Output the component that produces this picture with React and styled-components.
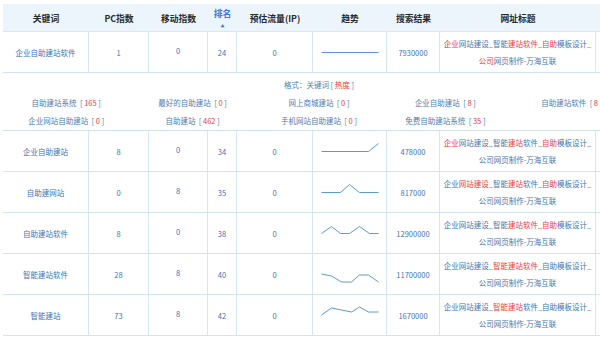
import React from 'react';
import styled, { createGlobalStyle } from 'styled-components';

const GlobalStyle = createGlobalStyle`
  body {
    margin: 0;
    background: #fff;
    font-family: "Noto Sans CJK SC", "Noto Sans", sans-serif;
    overflow: hidden;
  }
`;

const COLS = '86px 60px 59px 29px 76px 74px 53px 156px 39px';

const Page = styled.div`
  padding: 4px 0 0 3px;
  width: 632px;
`;

const HeaderRow = styled.div`
  display: grid;
  grid-template-columns: ${COLS};
  height: 28px;
  box-sizing: border-box;
  background: #edf5fc;
  border-bottom: 1px solid #d9e7f3;
`;

const HeadCell = styled.div`
  display: flex;
  flex-direction: column;
  align-items: center;
  justify-content: center;
  font-size: 8.8px;
  font-weight: bold;
  color: ${({ active }) => (active ? '#3b7bd0' : '#2a2a2a')};
  padding-top: ${({ active }) => (active ? '0' : '2px')};
  white-space: nowrap;
`;

const SortMark = styled.span`
  font-size: 4px;
  line-height: 4px;
  margin-top: 4px;
  color: #3b7bd0;
`;

const Row = styled.div`
  display: grid;
  grid-template-columns: ${COLS};
  height: 41px;
  box-sizing: border-box;
  border-bottom: 1px solid #d3e3f1;
`;

const Cell = styled.div`
  display: flex;
  align-items: center;
  justify-content: center;
  border-right: 1px solid #d6e6f3;
  font-size: 7.5px;
  color: #3d74b6;
  padding-bottom: ${({ raised }) => (raised ? '4px' : '0')};
  white-space: nowrap;
`;

const TitleCell = styled(Cell)`
  flex-direction: column;
  color: #4676b0;
`;

const TitleLine = styled.div`
  height: 17px;
  line-height: 17px;
`;

const Hot = styled.span`
  color: #f03b3b;
`;

const Expand = styled.div`
  height: 58px;
  box-sizing: border-box;
  padding-top: 3px;
  border-bottom: 1px solid #d3e3f1;
  font-size: 7.5px;
  line-height: 18px;
  color: #4f7db4;
`;

const Format = styled.div`
  text-align: center;
`;

const Related = styled.div`
  display: grid;
  grid-template-columns: repeat(5, 20%);
`;

const RelatedItem = styled.div`
  text-align: center;
  white-space: pre;
`;

const Spark = styled.svg`
  display: block;
`;

const headers = ['关键词', 'PC指数', '移动指数', '排名', '预估流量(IP)', '趋势', '搜索结果', '网址标题', ''];

const rows = [
  {
    kw: '企业自助建站软件', pc: 1, mobile: 0, rank: 24, ip: 0, results: 7930000,
    trend: [[0, 10.5], [57, 10.5]],
    title: ['{企业}网站建设_智能{建站软件}_{自助}模板设计_', '{公司}网页制作-万海互联'],
  },
  {
    kw: '企业自助建站', pc: 8, mobile: 0, rank: 34, ip: 0, results: 478000,
    trend: [[0, 10.5], [47, 10.5], [57, 2.5]],
    title: ['{企业}网站建设_智能{建站}软件_{自助}模板设计_', '公司网页制作-万海互联'],
  },
  {
    kw: '自助建网站', pc: 0, mobile: 8, rank: 35, ip: 0, results: 817000,
    trend: [[0, 10.5], [19, 10.5], [28, 2.5], [38, 10.5], [57, 10.5]],
    title: ['企业{网站建设}_智能{建站}软件_{自助}模板设计_', '公司网页制作-万海互联'],
  },
  {
    kw: '自助建站软件', pc: 8, mobile: 0, rank: 38, ip: 0, results: 12900000,
    trend: [[0, 10.5], [10, 3.5], [19, 10.5], [28, 10.5], [38, 3.5], [48, 10.5], [57, 10.5]],
    title: ['企业网站建设_智能{建站软件_自助}模板设计_', '公司网页制作-万海互联'],
  },
  {
    kw: '智能建站软件', pc: 28, mobile: 8, rank: 40, ip: 0, results: 11700000,
    trend: [[0, 10], [10, 12], [20, 18], [30, 18], [38, 11], [47, 11], [57, 18]],
    title: ['企业网站建设_{智能建站软件}_自助模板设计_', '公司网页制作-万海互联'],
  },
  {
    kw: '智能建站', pc: 73, mobile: 8, rank: 42, ip: 0, results: 1670000,
    trend: [[0, 10], [10, 3], [30, 7], [38, 2], [47, 7], [57, 7]],
    title: ['企业网站建设_{智能建站}软件_自助模板设计_', '公司网页制作-万海互联'],
  },
];

const related = [
  ['自助建站系统', 165], ['最好的自助建站', 0], ['网上商城建站', 0], ['企业自助建站', 8], ['自助建站软件', 8],
  ['企业网站自助建站', 0], ['自助建站', 462], ['手机网站自助建站', 0], ['免费自助建站系统', 35],
];

const Marked = ({ text }) =>
  text.split(/(\{[^}]+\})/).filter(Boolean).map((part, i) =>
    part.startsWith('{') ? <Hot key={i}>{part.slice(1, -1)}</Hot> : <span key={i}>{part}</span>
  );

const Trend = ({ points }) => (
  <Spark width="58" height="20" viewBox="0 0 58 20">
    <polyline
      points={points.map(([x, y]) => `${x + 0.5},${y}`).join(' ')}
      fill="none"
      stroke="#5f97d0"
      strokeWidth="1"
    />
  </Spark>
);

const DataRow = ({ row }) => (
  <Row>
    <Cell>{row.kw}</Cell>
    <Cell>{row.pc}</Cell>
    <Cell raised>{row.mobile}</Cell>
    <Cell>{row.rank}</Cell>
    <Cell>{row.ip}</Cell>
    <Cell><Trend points={row.trend} /></Cell>
    <Cell>{row.results}</Cell>
    <TitleCell>
      {row.title.map((line, i) => (
        <TitleLine key={i}><Marked text={line} /></TitleLine>
      ))}
    </TitleCell>
    <Cell />
  </Row>
);

export default function App() {
  return (
    <Page>
      <GlobalStyle />
      <HeaderRow>
        {headers.map((h, i) => (
          <HeadCell key={i} active={h === '排名'}>
            {h}
            {h === '排名' && <SortMark>▲</SortMark>}
          </HeadCell>
        ))}
      </HeaderRow>
      <DataRow row={rows[0]} />
      <Expand>
        <Format>格式：关键词 [ <Hot>热度</Hot> ]</Format>
        <Related>
          {related.map(([word, heat]) => (
            <RelatedItem key={word}>
              {word}{'  [ '}<Hot>{heat}</Hot>{' ]'}
            </RelatedItem>
          ))}
        </Related>
      </Expand>
      {rows.slice(1).map((row) => (
        <DataRow key={row.kw} row={row} />
      ))}
    </Page>
  );
}
